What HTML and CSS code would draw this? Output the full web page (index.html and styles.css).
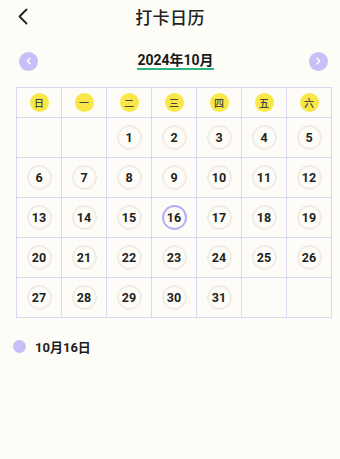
FILE: index.html
```html
<!DOCTYPE html>
<html lang="zh-CN">
<head>
    <meta charset="UTF-8">
    <meta name="viewport" content="width=device-width, initial-scale=1.0">
    <title>打卡日历</title>
    <link rel="stylesheet" href="styles.css">
</head>
<body>
    <div class="top-bar">
        <span class="back">
            <svg width="12" height="17" viewBox="0 0 12 17"><path d="M9.5 1.5 L2.5 8.5 L9.5 15.5" fill="none" stroke="#222" stroke-width="1.8" stroke-linecap="round" stroke-linejoin="round"/></svg>
        </span>
        <h1>打卡日历</h1>
    </div>

    <div class="month-nav">
        <span class="nav-btn">
            <svg width="8" height="8" viewBox="0 0 8 8"><path d="M5 1.2 L2.4 4 L5 6.8" fill="none" stroke="#fff" stroke-width="1.5" stroke-linecap="round" stroke-linejoin="round"/></svg>
        </span>
        <span class="month">2024年10月</span>
        <span class="nav-btn">
            <svg width="8" height="8" viewBox="0 0 8 8"><path d="M3 1.2 L5.6 4 L3 6.8" fill="none" stroke="#fff" stroke-width="1.5" stroke-linecap="round" stroke-linejoin="round"/></svg>
        </span>
    </div>

    <div class="calendar">
        <div class="week"><span>日</span></div>
        <div class="week"><span>一</span></div>
        <div class="week"><span>二</span></div>
        <div class="week"><span>三</span></div>
        <div class="week"><span>四</span></div>
        <div class="week"><span>五</span></div>
        <div class="week"><span>六</span></div>

        <div class="day"></div>
        <div class="day"></div>
        <div class="day"><span>1</span></div>
        <div class="day"><span>2</span></div>
        <div class="day"><span>3</span></div>
        <div class="day"><span>4</span></div>
        <div class="day"><span>5</span></div>

        <div class="day"><span>6</span></div>
        <div class="day"><span>7</span></div>
        <div class="day"><span>8</span></div>
        <div class="day"><span>9</span></div>
        <div class="day"><span>10</span></div>
        <div class="day"><span>11</span></div>
        <div class="day"><span>12</span></div>

        <div class="day"><span>13</span></div>
        <div class="day"><span>14</span></div>
        <div class="day"><span>15</span></div>
        <div class="day"><span class="today">16</span></div>
        <div class="day"><span>17</span></div>
        <div class="day"><span>18</span></div>
        <div class="day"><span>19</span></div>

        <div class="day"><span>20</span></div>
        <div class="day"><span>21</span></div>
        <div class="day"><span>22</span></div>
        <div class="day"><span>23</span></div>
        <div class="day"><span>24</span></div>
        <div class="day"><span>25</span></div>
        <div class="day"><span>26</span></div>

        <div class="day"><span>27</span></div>
        <div class="day"><span>28</span></div>
        <div class="day"><span>29</span></div>
        <div class="day"><span>30</span></div>
        <div class="day"><span>31</span></div>
        <div class="day"></div>
        <div class="day"></div>
    </div>

    <div class="selected">
        <span class="dot"></span>
        <span class="selected-date">10月16日</span>
    </div>
</body>
</html>
```

FILE: styles.css
```css
body {
    margin: 0;
    background-color: #fdfcf7;
    font-family: Roboto, "Noto Sans CJK SC", sans-serif;
    color: #222;
}
.top-bar {
    position: relative;
    height: 33px;
    display: flex;
    justify-content: center;
    align-items: center;
}
.back {
    position: absolute;
    left: 17px;
    top: 8px;
    display: flex;
}
h1 {
    margin: 0;
    font-size: 17px;
    font-weight: 500;
    letter-spacing: 0.4px;
    color: #222;
}
.month-nav {
    display: flex;
    justify-content: space-between;
    align-items: center;
    padding: 0 12px 0 19px;
    height: 52px;
    margin-top: 2px;
}
.nav-btn {
    width: 19px;
    height: 19px;
    border-radius: 50%;
    background-color: #c6bff8;
    display: flex;
    justify-content: center;
    align-items: center;
}
.month {
    font-size: 14px;
    font-weight: 700;
    color: #1a1a1a;
    border-bottom: 2px solid #2fb383;
    line-height: 16px;
    padding-bottom: 0;
    margin-left: 4px;
}
.calendar {
    display: grid;
    grid-template-columns: repeat(7, 1fr);
    grid-template-rows: 30px repeat(5, 40px);
    margin: 0 8px 0 16px;
    border-top: 1px solid #ddd6f5;
    border-left: 1px solid #ddd6f5;
}
.week, .day {
    border-right: 1px solid #ddd6f5;
    border-bottom: 1px solid #ddd6f5;
    display: flex;
    justify-content: center;
    align-items: center;
}
.week span {
    width: 19px;
    height: 19px;
    border-radius: 50%;
    background-color: #f8e746;
    font-size: 10px;
    color: #444;
    display: flex;
    justify-content: center;
    align-items: center;
    font-weight: 500;
}
.day span {
    width: 21px;
    height: 21px;
    border-radius: 50%;
    border: 2.5px solid #efede6;
    font-size: 12.5px;
    font-weight: 700;
    color: #1e1e1e;
    display: flex;
    justify-content: center;
    align-items: center;
}
.day span.today {
    border-color: #b7aef5;
}
.selected {
    display: flex;
    align-items: center;
    gap: 9px;
    padding: 19px 0 0 13px;
}
.dot {
    width: 13px;
    height: 13px;
    border-radius: 50%;
    background-color: #c6bff8;
}
.selected-date {
    font-size: 13px;
    font-weight: 700;
    color: #1e1e1e;
}
```
